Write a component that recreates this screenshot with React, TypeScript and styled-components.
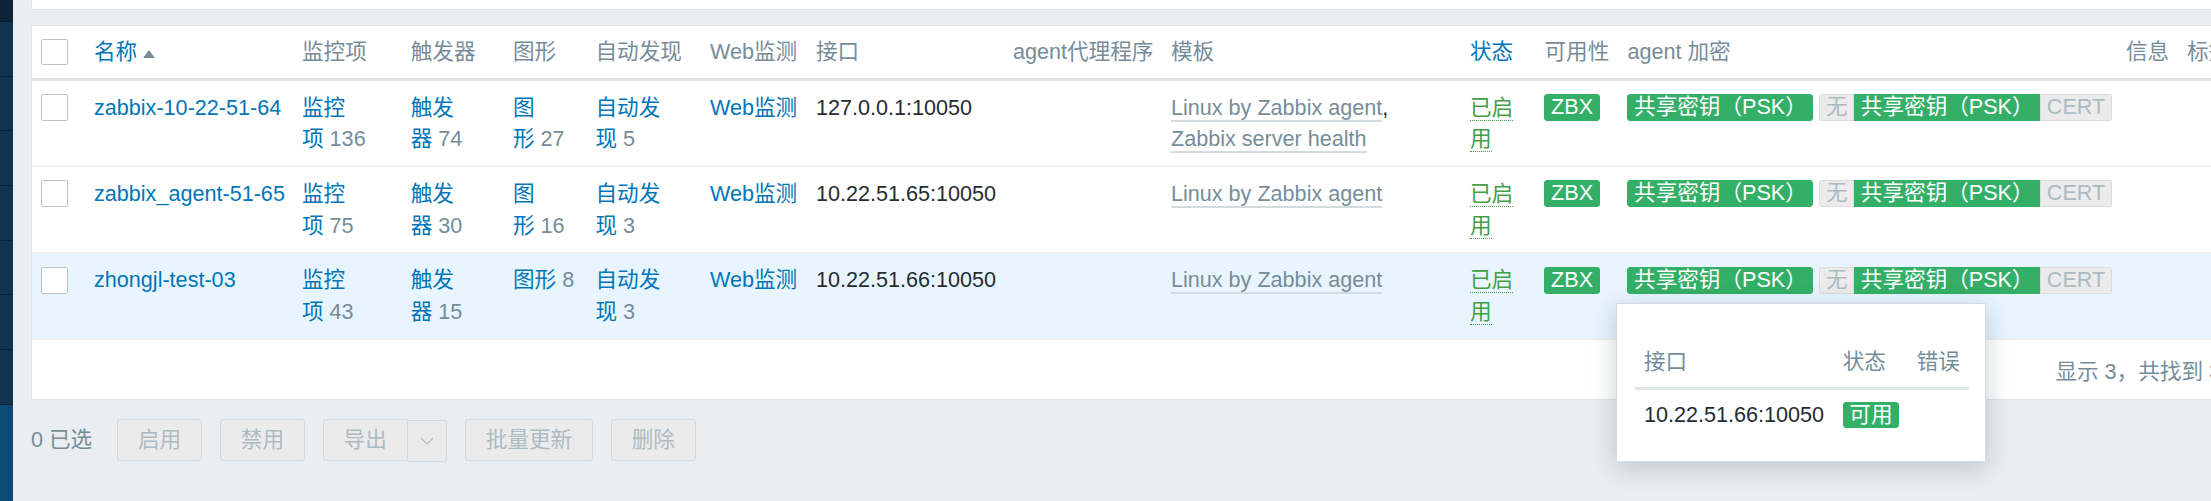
import React from "react";
import styled, { createGlobalStyle } from "styled-components";

const FONT = `"Liberation Sans", Arial, "Noto Sans CJK SC", sans-serif`;

const GlobalStyle = createGlobalStyle`
  html, body { margin: 0; padding: 0; overflow: hidden; background: #ebeef0; }
  body { font-family: ${FONT}; font-size: 21.6px; color: #1f2c33; }
  *, *::before, *::after { box-sizing: border-box; }
`;

const COLS =
  "53px 208px 108.7px 102.3px 82.5px 114.5px 106px 197px 158px 299px 74.5px 83px 498.5px 61px 1fr";

const Shell = styled.div`
  display: flex;
  width: max-content;
  height: 501px;
`;

const Sidebar = styled.nav`
  width: 13px;
  flex: none;
  height: 501px;
  display: flex;
  flex-direction: column;
  background: #0b4a72;
`;

const SideTop = styled.div`
  height: 22px;
  background: #0c2338;
  border-bottom: 1px solid #081a2b;
`;

const SideItem = styled.div`
  height: 54.7px;
  background: #11334f;
  border-bottom: 1px solid #0a2236;
`;

const Main = styled.main`
  flex: none;
  width: 2247px;
  padding-left: 18px;
  display: flex;
  flex-direction: column;
`;

const TopPanel = styled.div`
  height: 10px;
  background: #fff;
  border-left: 1px solid #dfe4e7;
  border-bottom: 1px solid #dfe4e7;
`;

const Card = styled.section`
  position: relative;
  margin-top: 15px;
  background: #fff;
  border: 1px solid #dfe4e7;
`;

const HeaderRow = styled.div`
  display: grid;
  grid-template-columns: ${COLS};
  border-bottom: 3px solid #dfe4e7;
`;

const HeadCell = styled.div<{ $active?: boolean }>`
  padding: 10px 9px;
  line-height: 32px;
  white-space: nowrap;
  overflow: visible;
  color: ${(p) => (p.$active ? "#0275b8" : "#768d99")};
`;

const BodyRow = styled.div<{ $hover?: boolean }>`
  display: grid;
  grid-template-columns: ${COLS};
  border-bottom: 2px solid #edf0f2;
  background: ${(p) => (p.$hover ? "#e8f5ff" : "#fff")};
`;

const Cell = styled.div<{ $padR?: number; $nowrap?: boolean }>`
  padding: 10.5px ${(p) => p.$padR ?? 9}px 10.5px 9px;
  line-height: 31.7px;
  white-space: ${(p) => (p.$nowrap ? "nowrap" : "normal")};
  min-width: 0;
`;

const Checkbox = styled.span`
  display: inline-block;
  width: 26.7px;
  height: 26.7px;
  margin-top: 2.5px;
  vertical-align: top;
  background: #fff;
  border: 1px solid #b7c3c9;
  border-radius: 2px;
`;

const SortArrow = styled.span`
  display: inline-block;
  width: 0;
  height: 0;
  margin-left: 5.5px;
  vertical-align: 1px;
  border-left: 6.3px solid transparent;
  border-right: 6.3px solid transparent;
  border-bottom: 8px solid #768d99;
`;

const Link = styled.span`
  color: #0275b8;
`;

const NoWrapLink = styled(Link)`
  white-space: nowrap;
`;

const Tail = styled.span`
  white-space: nowrap;
`;

const Count = styled.span`
  color: #768d99;
  margin-left: 6px;
`;

const TemplateLink = styled.span`
  color: #768d99;
  white-space: nowrap;
  border-bottom: 2px solid #d3dbdf;
`;

const StatusLink = styled.span`
  color: #429e47;
  border-bottom: 1px dotted #429e47;
`;

const Badge = styled.span<{ $tone: "green" | "grey" }>`
  display: inline-block;
  height: 26.7px;
  line-height: 24.7px;
  padding: 0 5.6px;
  margin-top: 2.5px;
  vertical-align: top;
  border-radius: 3px;
  border: 1px solid ${(p) => (p.$tone === "green" ? "#34af67" : "#dcdcdc")};
  background: ${(p) => (p.$tone === "green" ? "#34af67" : "#ebebeb")};
  color: ${(p) => (p.$tone === "green" ? "#fff" : "#acbbc2")};
  white-space: nowrap;
`;

const Segmented = styled.span`
  display: inline-flex;
  margin-left: 6px;
  margin-top: 2.5px;
  vertical-align: top;
  border-radius: 3px;
  overflow: hidden;

  & > ${Badge} {
    margin-top: 0;
    border-radius: 0;
  }
`;

const Paging = styled.div`
  height: 59px;
  display: flex;
  align-items: center;
  justify-content: flex-end;
  padding-right: 38px;
  color: #768d99;
  white-space: nowrap;
`;

const HintBox = styled.div`
  position: absolute;
  left: 1584px;
  top: 277px;
  width: 370px;
  padding: 32.4px 18px 20.8px;
  background: #fff;
  border: 1px solid #d5dde2;
  box-shadow: 0 6px 24px rgba(20, 40, 60, 0.22);
`;

const HintGrid = styled.div`
  display: grid;
  grid-template-columns: 198.7px 74px 1fr;
`;

const HintHead = styled.div`
  padding: 9.5px 9px;
  line-height: 31.7px;
  color: #768d99;
  white-space: nowrap;
  border-bottom: 3px solid #dfe4e7;
`;

const HintCell = styled.div`
  padding: 9.2px 9px;
  line-height: 31.7px;
  white-space: nowrap;
`;

const Footer = styled.div`
  margin-top: 19px;
  display: flex;
  align-items: flex-start;
  gap: 18px;
`;

const SelectedLabel = styled.span`
  line-height: 42px;
  color: #768d99;
  margin-right: 7px;
  white-space: nowrap;
`;

const Button = styled.button<{ $split?: "left" | "right" }>`
  height: 42px;
  padding: 0 19.8px;
  font: inherit;
  font-size: 21.6px;
  line-height: 40px;
  color: #acbbc2;
  background: #ebebeb;
  border: 1px solid #d3d9dc;
  border-radius: ${(p) =>
    p.$split === "left" ? "3px 0 0 3px" : p.$split === "right" ? "0 3px 3px 0" : "3px"};
  white-space: nowrap;
  cursor: default;
`;

const SplitGroup = styled.div`
  display: flex;
  align-items: flex-start;
`;

const ToggleButton = styled(Button)`
  width: 39.4px;
  padding: 0;
  margin-top: 1px;
  border-left-width: 0;
  display: flex;
  align-items: center;
  justify-content: center;
`;

type HostRow = {
  name: string;
  items: number;
  triggers: number;
  graphs: number;
  discovery: number;
  iface: string;
  templates: string[];
  hover?: boolean;
};

const rows: HostRow[] = [
  {
    name: "zabbix-10-22-51-64",
    items: 136,
    triggers: 74,
    graphs: 27,
    discovery: 5,
    iface: "127.0.0.1:10050",
    templates: ["Linux by Zabbix agent", "Zabbix server health"],
  },
  {
    name: "zabbix_agent-51-65",
    items: 75,
    triggers: 30,
    graphs: 16,
    discovery: 3,
    iface: "10.22.51.65:10050",
    templates: ["Linux by Zabbix agent"],
  },
  {
    name: "zhongjl-test-03",
    items: 43,
    triggers: 15,
    graphs: 8,
    discovery: 3,
    iface: "10.22.51.66:10050",
    templates: ["Linux by Zabbix agent"],
    hover: true,
  },
];

const CountLink: React.FC<{ label: string; count: number }> = ({ label, count }) => (
  <>
    <Link>{label.slice(0, -1)}</Link>
    <Tail>
      <Link>{label.slice(-1)}</Link>
      <Count>{count}</Count>
    </Tail>
  </>
);

const Templates: React.FC<{ list: string[] }> = ({ list }) => (
  <>
    {list.map((t, i) => (
      <React.Fragment key={t}>
        {i > 0 && ", "}
        <TemplateLink>{t}</TemplateLink>
      </React.Fragment>
    ))}
  </>
);

const Chevron = () => (
  <svg width="14" height="8" viewBox="0 0 14 8" fill="none">
    <polyline points="1,1 7,7 13,1" stroke="#acbbc2" strokeWidth="1.2" />
  </svg>
);

export default function App() {
  return (
    <>
      <GlobalStyle />
      <Shell>
        <Sidebar>
          <SideTop />
          {Array.from({ length: 7 }).map((_, i) => (
            <SideItem key={i} />
          ))}
        </Sidebar>
        <Main>
          <TopPanel />
          <Card>
            <HeaderRow>
              <HeadCell>
                <Checkbox />
              </HeadCell>
              <HeadCell $active>
                名称
                <SortArrow />
              </HeadCell>
              <HeadCell>监控项</HeadCell>
              <HeadCell>触发器</HeadCell>
              <HeadCell>图形</HeadCell>
              <HeadCell>自动发现</HeadCell>
              <HeadCell>Web监测</HeadCell>
              <HeadCell>接口</HeadCell>
              <HeadCell>agent代理程序</HeadCell>
              <HeadCell>模板</HeadCell>
              <HeadCell $active>状态</HeadCell>
              <HeadCell>可用性</HeadCell>
              <HeadCell>agent 加密</HeadCell>
              <HeadCell>信息</HeadCell>
              <HeadCell>标签</HeadCell>
            </HeaderRow>
            {rows.map((r) => (
              <BodyRow key={r.name} $hover={r.hover}>
                <Cell>
                  <Checkbox />
                </Cell>
                <Cell $nowrap>
                  <Link>{r.name}</Link>
                </Cell>
                <Cell $padR={20}>
                  <CountLink label="监控项" count={r.items} />
                </Cell>
                <Cell $padR={20}>
                  <CountLink label="触发器" count={r.triggers} />
                </Cell>
                <Cell $padR={8.5}>
                  <CountLink label="图形" count={r.graphs} />
                </Cell>
                <Cell $padR={20}>
                  <CountLink label="自动发现" count={r.discovery} />
                </Cell>
                <Cell>
                  <NoWrapLink>Web监测</NoWrapLink>
                </Cell>
                <Cell $nowrap>{r.iface}</Cell>
                <Cell />
                <Cell $padR={30}>
                  <Templates list={r.templates} />
                </Cell>
                <Cell $padR={12}>
                  <StatusLink>已启用</StatusLink>
                </Cell>
                <Cell $nowrap>
                  <Badge $tone="green">ZBX</Badge>
                </Cell>
                <Cell $nowrap>
                  <Badge $tone="green">共享密钥（PSK）</Badge>
                  <Segmented>
                    <Badge $tone="grey">无</Badge>
                    <Badge $tone="green">共享密钥（PSK）</Badge>
                    <Badge $tone="grey">CERT</Badge>
                  </Segmented>
                </Cell>
                <Cell />
                <Cell />
              </BodyRow>
            ))}
            <Paging>显示 3，共找到 3</Paging>
            <HintBox>
              <HintGrid>
                <HintHead>接口</HintHead>
                <HintHead>状态</HintHead>
                <HintHead>错误</HintHead>
                <HintCell>10.22.51.66:10050</HintCell>
                <HintCell>
                  <Badge $tone="green">可用</Badge>
                </HintCell>
                <HintCell />
              </HintGrid>
            </HintBox>
          </Card>
          <Footer>
            <SelectedLabel>0 已选</SelectedLabel>
            <Button>启用</Button>
            <Button>禁用</Button>
            <SplitGroup>
              <Button $split="left">导出</Button>
              <ToggleButton $split="right">
                <Chevron />
              </ToggleButton>
            </SplitGroup>
            <Button>批量更新</Button>
            <Button>删除</Button>
          </Footer>
        </Main>
      </Shell>
    </>
  );
}
